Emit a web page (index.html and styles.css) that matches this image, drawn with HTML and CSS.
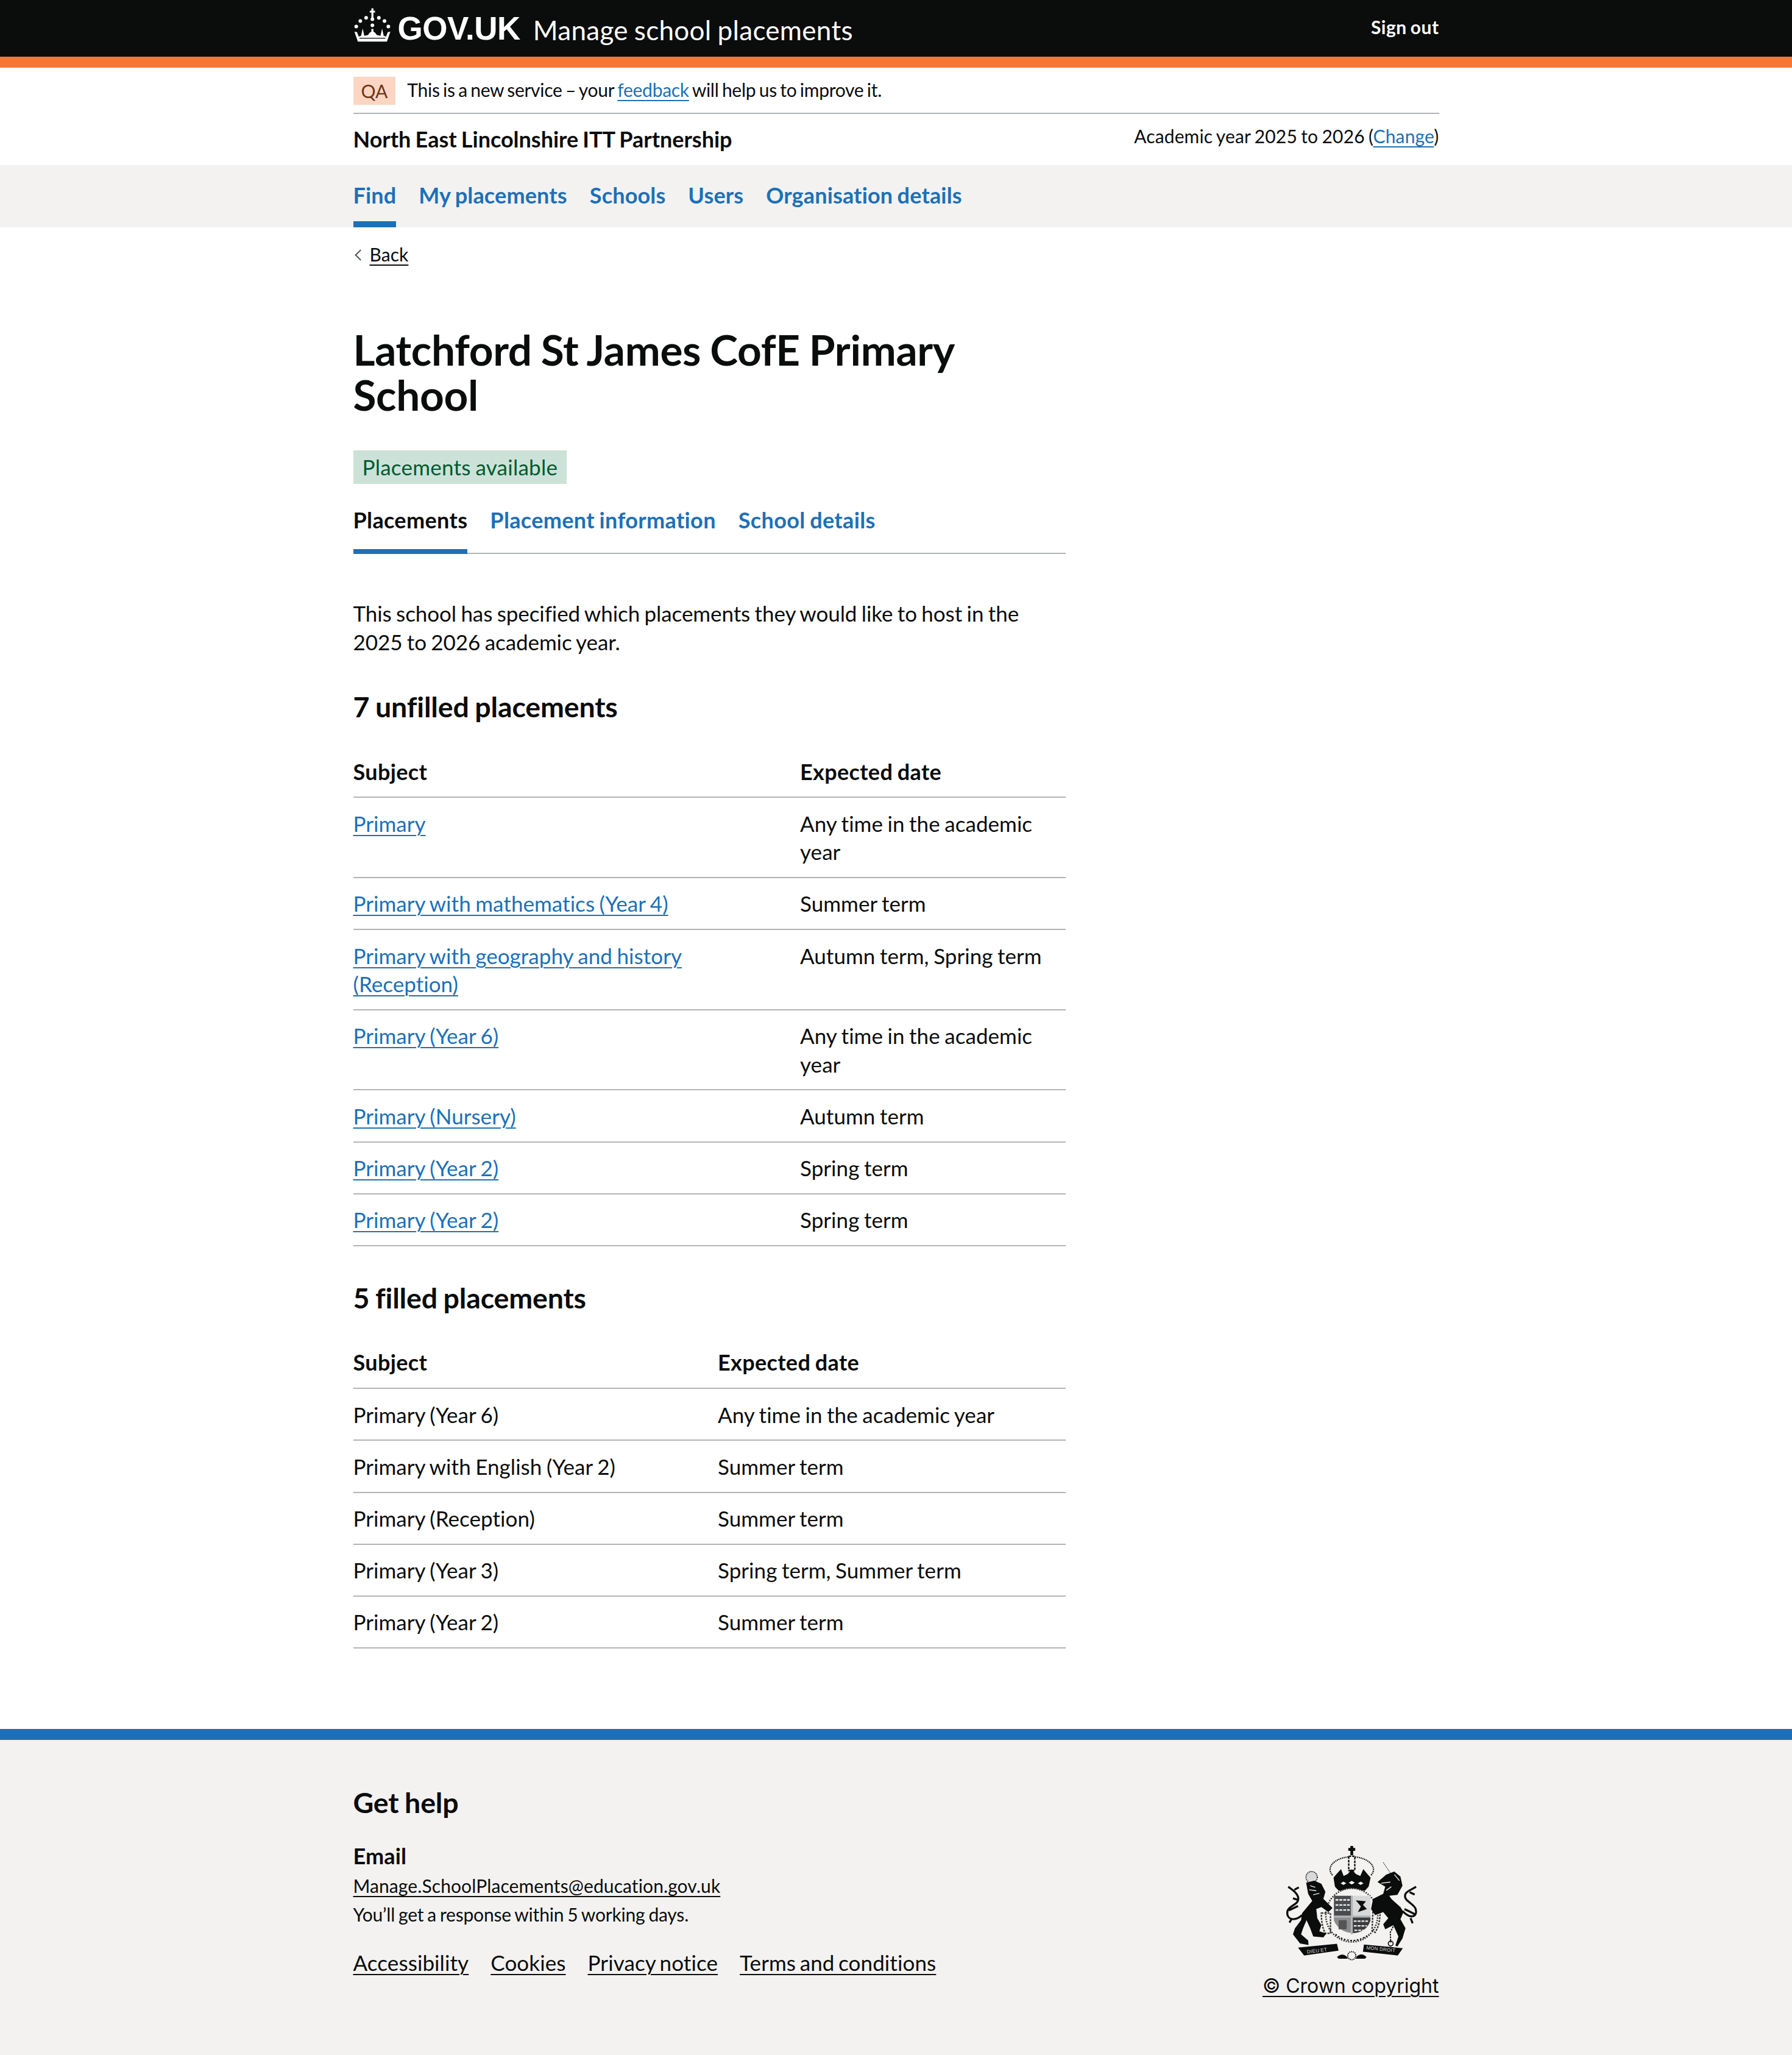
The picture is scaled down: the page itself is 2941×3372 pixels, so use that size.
FILE: index.html
```html
<!DOCTYPE html>
<html lang="en">
<head>
    <meta charset="UTF-8">
    <meta name="viewport" content="width=device-width, initial-scale=1.0">
    <title>Latchford St James CofE Primary School - Manage school placements</title>
    <link rel="stylesheet" href="styles.css">
</head>
<body>

    <header class="header">
        <div class="container header-row">
            <div class="header-brand">
                <svg class="crown" viewBox="55 35 185 175" aria-hidden="true">
                    <g fill="#fff">
                        <rect x="143" y="40" width="10" height="48"/>
                        <rect x="135" y="52" width="26" height="9"/>
                        <circle cx="148" cy="94" r="9"/>
                        <circle cx="117" cy="87" r="9"/>
                        <circle cx="180" cy="87" r="9"/>
                        <circle cx="88" cy="103" r="9"/>
                        <circle cx="208" cy="103" r="9"/>
                        <circle cx="68" cy="130" r="9"/>
                        <circle cx="227" cy="130" r="9"/>
                        <circle cx="148" cy="124" r="9"/>
                        <path d="M59 156 L72 158 L80 180 L92 176 L100 140 L108 176 L126 172 L135 160 L143 156 L143 142 L153 142 L153 156 L161 160 L170 172 L188 176 L196 140 L204 176 L216 180 L224 158 L237 156 L220 205 L76 205 Z"/>
                    </g>
                    <rect x="84" y="186" width="128" height="4" fill="#0b0c0c"/>
                </svg>
                <span class="logo-text">GOV.UK</span>
                <span class="service-name">Manage school placements</span>
            </div>
            <a class="sign-out" href="#">Sign out</a>
        </div>
    </header>

    <div class="container">
        <div class="phase">
            <strong class="phase-tag">QA</strong>
            <span class="phase-text">This is a new service – your <a href="#">feedback</a> will help us to improve it.</span>
        </div>
        <div class="org-row">
            <span class="org-name">North East Lincolnshire ITT Partnership</span>
            <span class="year">Academic year 2025 to 2026 (<a href="#">Change</a>)</span>
        </div>
    </div>

    <nav class="nav">
        <ul class="container nav-list">
            <li><a class="nav-link active" href="#">Find</a></li>
            <li><a class="nav-link" href="#">My placements</a></li>
            <li><a class="nav-link" href="#">Schools</a></li>
            <li><a class="nav-link" href="#">Users</a></li>
            <li><a class="nav-link" href="#">Organisation details</a></li>
        </ul>
    </nav>

    <main class="container">
        <a class="back" href="#"><span>Back</span></a>

        <div class="two-thirds">
            <h1>Latchford St James CofE Primary School</h1>
            <strong class="tag">Placements available</strong>

            <ul class="tabs">
                <li><a class="tab active" href="#">Placements</a></li>
                <li><a class="tab" href="#">Placement information</a></li>
                <li><a class="tab" href="#">School details</a></li>
            </ul>

            <p class="intro">This school has specified which placements they would like to host in the 2025 to 2026 academic year.</p>

            <h2>7 unfilled placements</h2>
            <table class="table">
                <colgroup><col class="col-unfilled"><col></colgroup>
                <thead>
                    <tr><th>Subject</th><th>Expected date</th></tr>
                </thead>
                <tbody>
                    <tr><td><a href="#">Primary</a></td><td>Any time in the academic year</td></tr>
                    <tr><td><a href="#">Primary with mathematics (Year 4)</a></td><td>Summer term</td></tr>
                    <tr><td><a href="#">Primary with geography and history (Reception)</a></td><td>Autumn term, Spring term</td></tr>
                    <tr><td><a href="#">Primary (Year 6)</a></td><td>Any time in the academic year</td></tr>
                    <tr><td><a href="#">Primary (Nursery)</a></td><td>Autumn term</td></tr>
                    <tr><td><a href="#">Primary (Year 2)</a></td><td>Spring term</td></tr>
                    <tr><td><a href="#">Primary (Year 2)</a></td><td>Spring term</td></tr>
                </tbody>
            </table>

            <h2 class="second">5 filled placements</h2>
            <table class="table">
                <colgroup><col class="col-filled"><col></colgroup>
                <thead>
                    <tr><th>Subject</th><th>Expected date</th></tr>
                </thead>
                <tbody>
                    <tr><td>Primary (Year 6)</td><td>Any time in the academic year</td></tr>
                    <tr><td>Primary with English (Year 2)</td><td>Summer term</td></tr>
                    <tr><td>Primary (Reception)</td><td>Summer term</td></tr>
                    <tr><td>Primary (Year 3)</td><td>Spring term, Summer term</td></tr>
                    <tr><td>Primary (Year 2)</td><td>Summer term</td></tr>
                </tbody>
            </table>
        </div>
    </main>

    <footer class="footer">
        <div class="container footer-row">
            <div>
                <h2 class="footer-title">Get help</h2>
                <div class="footer-label">Email</div>
                <a class="footer-mail" href="#">Manage.SchoolPlacements@education.gov.uk</a>
                <p class="footer-note">You’ll get a response within 5 working days.</p>
                <ul class="footer-links">
                    <li><a href="#">Accessibility</a></li>
                    <li><a href="#">Cookies</a></li>
                    <li><a href="#">Privacy notice</a></li>
                    <li><a href="#">Terms and conditions</a></li>
                </ul>
            </div>
            <div class="footer-licence">
                <svg class="crest" viewBox="200 70 670 590" aria-hidden="true">
                    <!-- crown -->
                    <path d="M440 228 C405 190 450 145 518 138 M552 138 C620 145 665 190 630 228" fill="none" stroke="#0b0c0c" stroke-width="7" stroke-dasharray="5 4"/>
                    <path d="M528 84h14v10h10v14h-10v22h-14v-22h-10v-14h10z" fill="#0b0c0c"/>
                    <path d="M520 135h30v70h-30z" fill="none" stroke="#0b0c0c" stroke-width="7" stroke-dasharray="12 5"/>
                    <path d="M445 240 L460 222 L482 198 L495 232 L515 222 L535 198 L555 222 L577 232 L592 198 L612 222 L628 240 L618 285 L600 304 L470 304 L452 285 Z" fill="#0b0c0c"/>
                    <path d="M480 268l14-8 14 8-14 8zM520 265l15-9 15 9-15 9zM565 268l14-8 14 8-14 8z" fill="#f3f2f1"/>
                    <!-- shield and garter -->
                    <ellipse cx="535" cy="425" rx="128" ry="132" fill="#f3f2f1" stroke="#333" stroke-width="8" stroke-dasharray="6 6"/>
                    <path d="M385 415h45v100h-25c-15-25-20-60-20-100zM640 395h35c0 50-5 85-25 115l-15-10z" fill="none" stroke="#333" stroke-width="7" stroke-dasharray="10 5"/>
                    <path d="M447 330h88v102h-88z" fill="#4a4b4c"/>
                    <path d="M535 330h92v102h-92z" fill="#d8d8d8"/>
                    <path d="M447 432h88v80c-35 0-70-20-88-60z" fill="#8c8d8e"/>
                    <path d="M535 432h92v20c-15 45-50 62-92 62z" fill="#3c3d3e"/>
                    <path d="M455 350h70M455 375h70M455 400h70M545 455h70M545 478h65M548 500h45" stroke="#f3f2f1" stroke-width="7" stroke-dasharray="14 5"/>
                    <path d="M555 352l50 5-15 18 20 20-45 15 15-28z" fill="#0b0c0c"/>
                    <path d="M470 450h40v45h-40z" fill="#555"/>
                    <path d="M535 330v190M447 432h180" stroke="#b1b4b6" stroke-width="10"/>
                    <path d="M455 520 C500 560 570 560 620 520" fill="none" stroke="#0b0c0c" stroke-width="6" stroke-dasharray="8 8"/>
                    <!-- lion -->
                    <circle cx="337" cy="238" r="28" fill="#d9d9d9" stroke="#0b0c0c" stroke-width="5" stroke-dasharray="5 4"/>
                    <path d="M310 265 L350 255 L385 270 L405 310 L395 345 L440 390 L420 410 L385 385 L360 395 L365 440 L385 475 L375 505 L410 515 L395 535 L345 530 L330 490 L312 450 L295 490 L285 520 L320 550 L322 572 L280 565 L245 520 L255 490 L285 450 L290 415 L340 355 L320 320 Z" fill="#0b0c0c"/>
                    <path d="M330 280l25 8M325 300l35 5M345 325l30-8" stroke="#f3f2f1" stroke-width="4"/>
                    <path d="M290 425 C250 460 210 445 218 405 C226 375 280 375 270 335 C262 310 240 300 222 285 M252 300l22-12M225 402l45-22M240 440l-12 22M270 350l-25-8" fill="none" stroke="#0b0c0c" stroke-width="10"/>
                    <!-- unicorn -->
                    <path d="M690 165 L728 222" stroke="#0b0c0c" stroke-width="3" stroke-dasharray="6 3"/>
                    <path d="M662 262 L705 225 L745 210 L775 235 L785 280 L760 325 L720 330 L730 345 L775 385 L790 410 L775 445 L800 490 L785 540 L760 580 L750 575 L765 530 L740 475 L700 495 L690 470 L715 440 L690 410 L650 425 L630 395 L640 345 L690 320 L700 285 Z" fill="#0b0c0c"/>
                    <path d="M680 268l45-6M730 285l-25 18M745 225l25 30" stroke="#f3f2f1" stroke-width="4"/>
                    <path d="M745 470 L725 510 L727 560" fill="none" stroke="#0b0c0c" stroke-width="6" stroke-dasharray="8 5"/>
                    <circle cx="727" cy="565" r="12" fill="none" stroke="#0b0c0c" stroke-width="5"/>
                    <path d="M785 405 C830 450 860 430 850 395 C840 365 785 355 800 320 C808 305 830 300 852 285 M820 312l25 12M845 420l-50-25M825 440l10 25" fill="none" stroke="#0b0c0c" stroke-width="10"/>
                    <!-- motto -->
                    <path d="M270 585 L462 566 L470 600 L300 624 Z" fill="#0b0c0c"/>
                    <path d="M595 570 L787 588 L762 624 L590 605 Z" fill="#0b0c0c"/>
                    <text class="motto" transform="translate(315 614) rotate(-7)">DIEU ET</text>
                    <text class="motto" transform="translate(606 593) rotate(6)">MON DROIT</text>
                    <path d="M462 632 C490 605 515 630 515 640 L470 640 Z M555 640 C555 625 585 605 608 632 L600 640 Z" fill="#0b0c0c"/>
                    <circle cx="535" cy="625" r="20" fill="none" stroke="#0b0c0c" stroke-width="6" stroke-dasharray="5 4"/>
                </svg>
                <a class="copyright" href="#">© Crown copyright</a>
            </div>
        </div>
    </footer>

</body>
</html>
```

FILE: styles.css
```css
* {
    box-sizing: border-box;
}

body {
    margin: 0;
    font-family: Lato, "Noto Sans", sans-serif;
    font-size: 35px;
    line-height: 46.4px;
    color: #0b0c0c;
    background-color: #ffffff;
    letter-spacing: 0.05px;
    word-spacing: -1.5px;
}

a {
    color: #1d70b8;
    text-decoration-thickness: 2px;
    text-underline-offset: 5px;
}

ul {
    list-style: none;
    margin: 0;
    padding: 0;
}

.container {
    width: 1782px;
    margin-left: auto;
    margin-right: auto;
}

/* header */
.header {
    height: 111px;
    background-color: #0b0c0c;
    border-bottom: 18px solid #f47738;
}

.header-row {
    display: flex;
    justify-content: space-between;
    height: 93px;
}

.header-brand {
    display: flex;
    align-items: flex-start;
    color: #ffffff;
}

.crown {
    width: 62px;
    height: 58px;
    margin-top: 12px;
}

.logo-text {
    margin-left: 11px;
    font-family: "Liberation Sans", sans-serif;
    font-size: 53px;
    line-height: 94px;
    font-weight: 700;
    letter-spacing: -0.5px;
}

.service-name {
    margin-left: 21px;
    font-size: 44px;
    line-height: 98px;
    letter-spacing: 0.3px;
}

.sign-out {
    font-size: 30px;
    line-height: 88px;
    font-weight: 700;
    letter-spacing: 0.45px;
    color: #ffffff;
    text-decoration: none;
}

/* phase banner */
.phase {
    display: flex;
    align-items: center;
    gap: 19px;
    padding: 15px 0 13px;
    border-bottom: 2px solid #b1b4b6;
    font-size: 30px;
    line-height: 46px;
}

.phase-tag {
    padding: 0 13px;
    background-color: #fcd6c3;
    color: #6e3619;
    font-weight: 400;
}

.phase-text {
    padding-bottom: 4px;
    line-height: 42px;
    letter-spacing: -0.27px;
    word-spacing: -2px;
}

.org-row {
    display: flex;
    justify-content: space-between;
    height: 84px;
}

.org-name {
    font-size: 36px;
    font-weight: 700;
    line-height: 82px;
    letter-spacing: -0.02px;
}

.year {
    font-size: 30px;
    line-height: 72px;
    letter-spacing: 0.14px;
}

/* primary nav */
.nav {
    height: 102px;
    background-color: #f3f2f1;
}

.nav-list {
    display: flex;
    gap: 37px;
}

.nav-link {
    display: block;
    height: 102px;
    padding-top: 26px;
    font-size: 36px;
    font-weight: 700;
    letter-spacing: 0.15px;
    text-decoration: none;
    border-bottom: 10px solid transparent;
}

.nav-link.active {
    border-bottom-color: #1d70b8;
}

/* back link */
.back {
    display: inline-block;
    margin-top: 26px;
    font-size: 30px;
    line-height: 37px;
    color: #0b0c0c;
    position: relative;
    padding-left: 27px;
}

.back::before {
    content: "";
    position: absolute;
    left: 5px;
    top: 13px;
    width: 11px;
    height: 11px;
    border-left: 2px solid #505a5f;
    border-bottom: 2px solid #505a5f;
    transform: rotate(45deg);
}

/* main column */
.two-thirds {
    width: 1169px;
}

h1 {
    margin: 99px 0 54px;
    font-size: 69.3px;
    line-height: 74px;
    font-weight: 700;
    letter-spacing: -0.3px;
}

.tag {
    display: block;
    width: fit-content;
    height: 55px;
    padding: 0 15px;
    background-color: #cce2d8;
    color: #005a30;
    font-weight: 400;
    line-height: 54px;
    letter-spacing: 0.25px;
}

.tabs {
    display: flex;
    gap: 37px;
    margin-top: 36px;
    border-bottom: 2px solid #b1b4b6;
}

.tab {
    display: block;
    height: 79px;
    margin-bottom: -2px;
    font-size: 36px;
    font-weight: 700;
    letter-spacing: 0.35px;
    text-decoration: none;
    border-bottom: 8px solid transparent;
}

.tab.active {
    color: #0b0c0c;
    border-bottom-color: #1d70b8;
}

.intro {
    margin: 74px 0 0;
    letter-spacing: -0.07px;
}

h2 {
    margin: 55px 0 37px;
    font-size: 46.5px;
    line-height: 56px;
    font-weight: 700;
    letter-spacing: -0.15px;
}

h2.second {
    margin-top: 56px;
}

.table {
    width: 100%;
    border-collapse: collapse;
    table-layout: fixed;
}

.col-unfilled {
    width: 733.5px;
}

.col-filled {
    width: 598.5px;
}

.table th,
.table td {
    padding: 18.4px 37px 18.4px 0;
    text-align: left;
    vertical-align: top;
    border-bottom: 2px solid #b1b4b6;
}

.table th {
    font-size: 36px;
    letter-spacing: 0.35px;
}

.table th:last-child,
.table td:last-child {
    padding-right: 0;
}

/* footer */
.footer {
    margin-top: 132px;
    height: 536px;
    background-color: #f3f2f1;
    border-top: 18px solid #1d70b8;
}

.footer a {
    color: #0b0c0c;
}

.footer-row {
    display: flex;
    justify-content: space-between;
}

.footer-title {
    margin: 74px 0 37px;
}

.footer-label {
    font-size: 36px;
    font-weight: 700;
    letter-spacing: 0.15px;
}

.footer-mail {
    display: block;
    width: fit-content;
    margin-top: 8px;
    font-size: 30px;
    line-height: 37px;
    letter-spacing: 0.1px;
}

.footer-note {
    margin: 10px 0 0;
    font-size: 30px;
    line-height: 37px;
    letter-spacing: -0.2px;
}

.footer-links {
    display: flex;
    gap: 36px;
    margin-top: 37px;
    letter-spacing: 0.1px;
    word-spacing: -2.5px;
}

.footer-licence {
    display: flex;
    flex-direction: column;
    align-items: center;
    padding-top: 169px;
}

.crest {
    width: 223px;
    height: 197px;
    margin-left: 4px;
}

.motto {
    font-family: "Liberation Sans", sans-serif;
    font-size: 24px;
    letter-spacing: 1px;
    fill: #d8d8d8;
}

.copyright {
    margin-top: 15px;
    font-family: Inter, sans-serif;
    font-size: 32px;
    letter-spacing: 0;
    word-spacing: 0;
}
```
